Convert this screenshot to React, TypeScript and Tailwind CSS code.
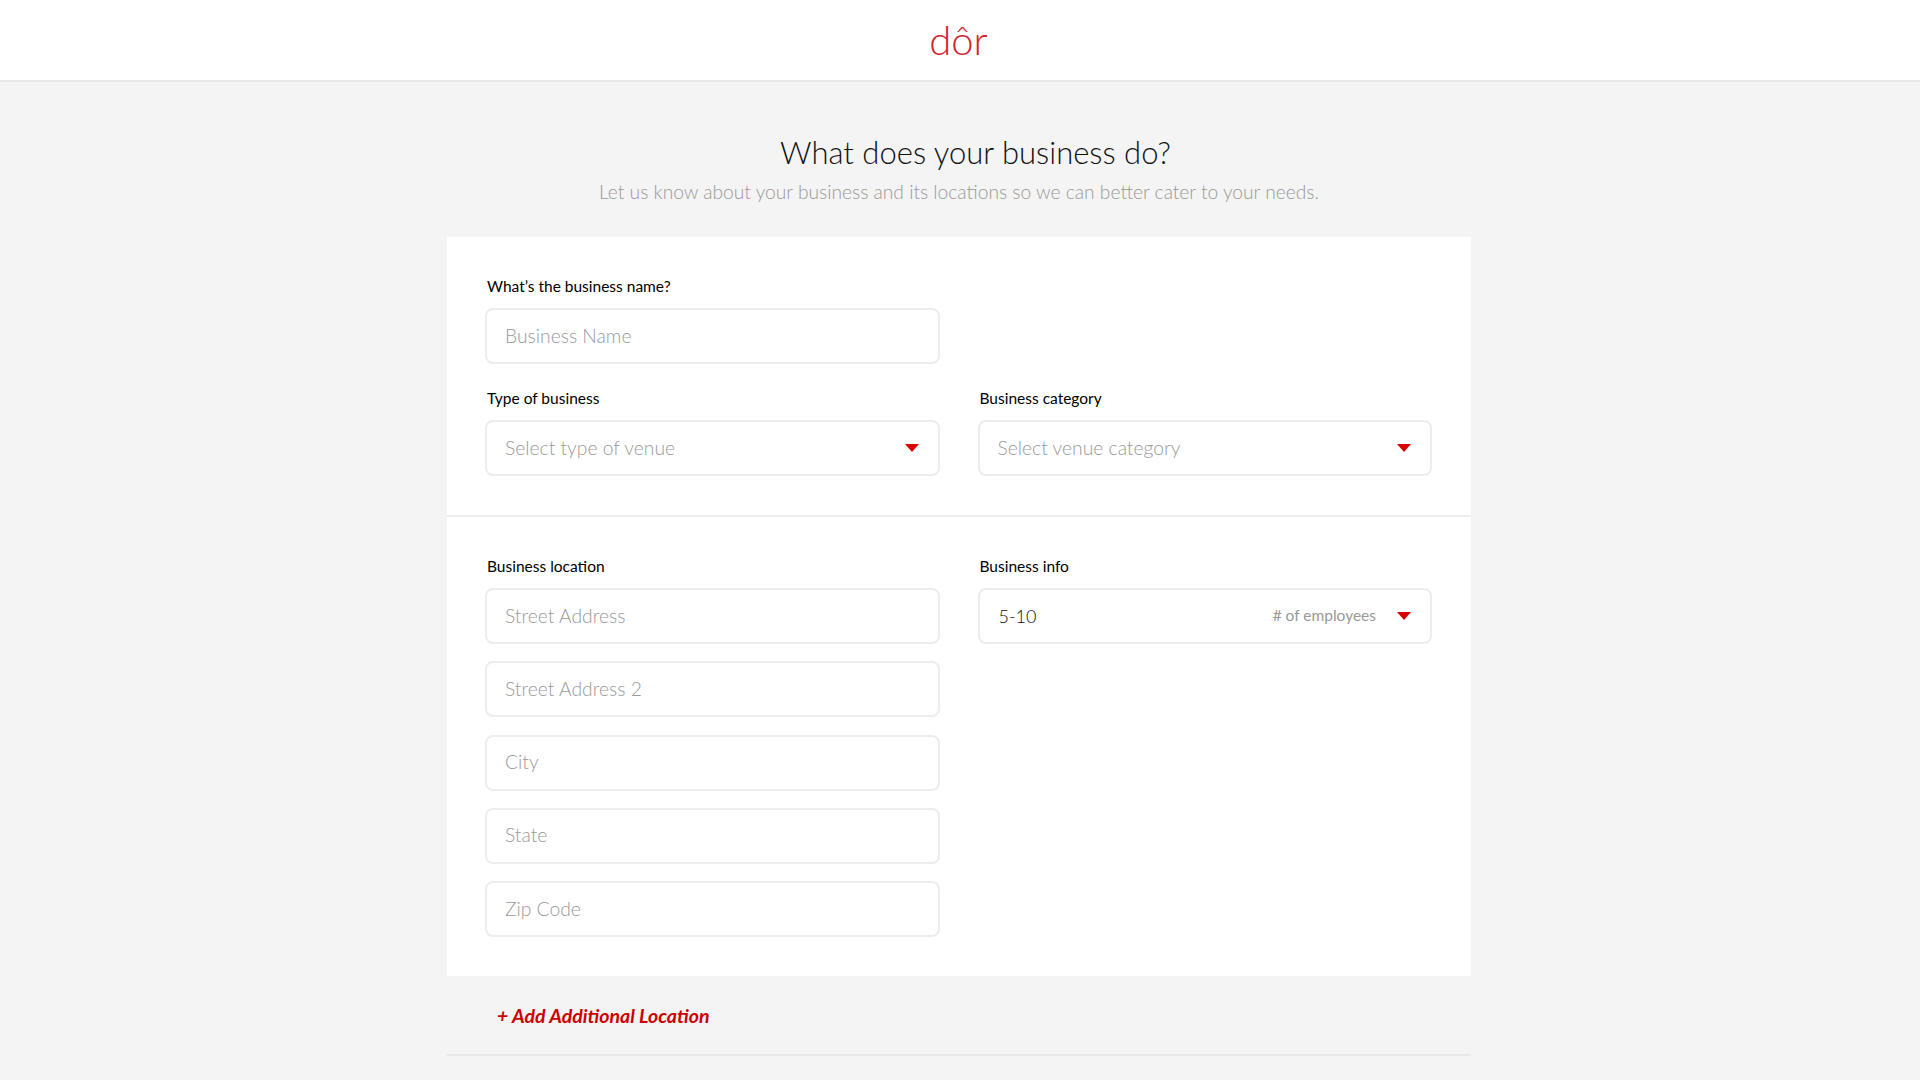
import React from "react";

const font = "font-['Lato','Liberation_Sans',sans-serif]";

function Caret() {
  return (
    <svg width="14" height="8" viewBox="0 0 14 8" className="block shrink-0">
      <path d="M0 0 H14 L7 8 Z" fill="#d90000" />
    </svg>
  );
}

function Field({ placeholder }: { placeholder: string }) {
  return (
    <div className="h-[56px] w-full rounded-[8px] border-2 border-[#ededed] bg-white pl-[18px] flex items-center text-[19.3px] font-light text-[#999999]">
      {placeholder}
    </div>
  );
}

function SelectBox({ placeholder }: { placeholder: string }) {
  return (
    <div className="h-[56px] w-full rounded-[8px] border-2 border-[#ededed] bg-white pl-[18px] pr-[19px] flex items-center justify-between text-[19.3px] font-light text-[#999999]">
      <span>{placeholder}</span>
      <Caret />
    </div>
  );
}

function Label({ children }: { children: React.ReactNode }) {
  return <div className="h-[22px] mb-[11px] pl-[2px] text-[15.5px] leading-[22px] font-normal text-black">{children}</div>;
}

export default function App() {
  return (
    <div className={`${font} h-[1080px] overflow-hidden bg-[#f4f4f4]`}>
      <header className="h-[82px] bg-white border-b-2 border-[#e8e8e8] flex items-center justify-center">
        <span className="text-[40px] leading-none font-light text-[#d0232b] -ml-[3px]">dôr</span>
      </header>

      <main className="w-[1024px] ml-[447px]">
        <h1 className="mt-[48px] pl-[33px] text-center text-[31px] leading-[44px] font-light text-[#111111]">
          What does your business do?
        </h1>
        <p className="mt-[4px] text-center text-[19.2px] leading-[28px] font-light text-[#999999]">
          Let us know about your business and its locations so we can better cater to your needs.
        </p>

        <section className="mt-[31px] bg-white">
          <div className="pt-[38px] pb-[39px] pl-[38px] pr-[39px] border-b-2 border-[#efefef]">
            <Label>What’s the business name?</Label>
            <div className="grid grid-cols-2 gap-x-[38px]">
              <Field placeholder="Business Name" />
            </div>
            <div className="grid grid-cols-2 gap-x-[38px] mt-[23px]">
              <div>
                <Label>Type of business</Label>
                <SelectBox placeholder="Select type of venue" />
              </div>
              <div>
                <Label>Business category</Label>
                <SelectBox placeholder="Select venue category" />
              </div>
            </div>
          </div>

          <div className="pt-[38px] pb-[39px] pl-[38px] pr-[39px] grid grid-cols-2 gap-x-[38px]">
            <div>
              <Label>Business location</Label>
              <div className="flex flex-col gap-[17.3px]">
                <Field placeholder="Street Address" />
                <Field placeholder="Street Address 2" />
                <Field placeholder="City" />
                <Field placeholder="State" />
                <Field placeholder="Zip Code" />
              </div>
            </div>
            <div>
              <Label>Business info</Label>
              <div className="h-[56px] w-full rounded-[8px] border-2 border-[#ededed] bg-white pl-[19px] pr-[19px] flex items-center">
                <span className="text-[18px] font-light text-[#111111]">5-10</span>
                <span className="ml-auto mr-[21px] text-[15.5px] font-normal text-[#999999]">
                  # of employees
                </span>
                <Caret />
              </div>
            </div>
          </div>
        </section>

        <div className="h-[80px] border-b-2 border-[#e8e8e8] pl-[50px] flex items-center">
          <span className="text-[19.5px] font-bold italic text-[#cc0000]">+ Add Additional Location</span>
        </div>
      </main>
    </div>
  );
}
